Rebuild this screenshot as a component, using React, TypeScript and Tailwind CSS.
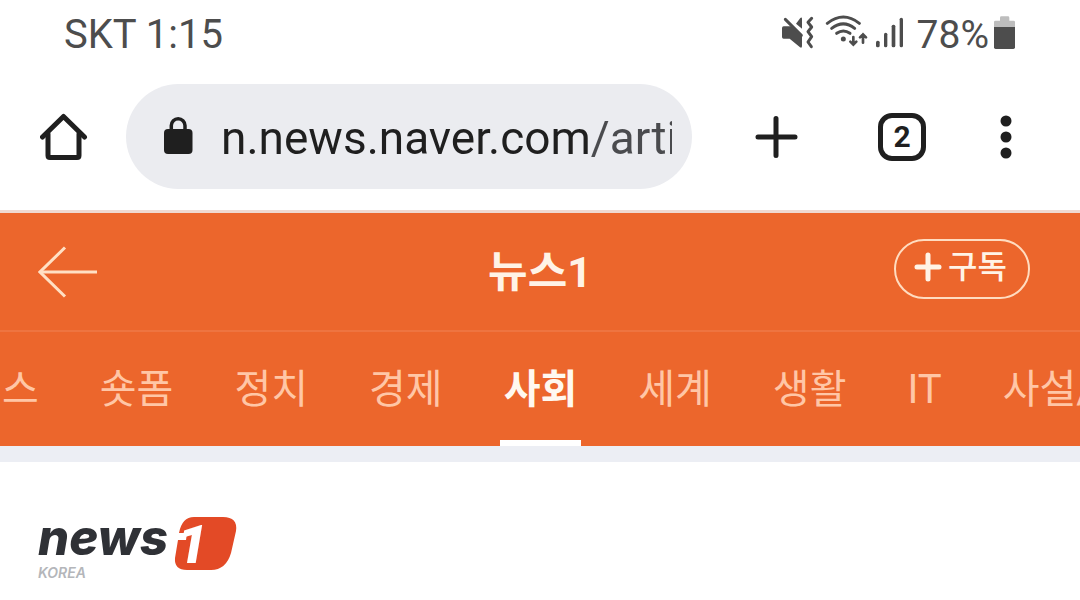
import React, { useState } from 'react';

/* ── Status bar icons ─────────────────────── */
function MuteIcon() {
  return (
    <svg viewBox="60 42 102 108" className="h-9 w-[34px]" fill="currentColor" aria-hidden="true">
      <path d="M68 79 Q63 79 63 84 V111 Q63 116 68 116 H86 L117 142 Q123 145 123 138 V109 L92 79 Z" />
      <path d="M105 71 L118 54 Q123 50 123 57 V86 Z" />
      <path d="M73 58 L121 106" stroke="currentColor" strokeWidth="9" strokeLinecap="round" />
      <path
        d="M152 55 L141 67 L152 81 L141 95 L152 110 L141 126 L151 140"
        fill="none"
        stroke="currentColor"
        strokeWidth="9"
        strokeLinecap="round"
        strokeLinejoin="round"
      />
    </svg>
  );
}

function WifiIcon() {
  return (
    <svg viewBox="192 42 132 108" className="h-9 w-11" fill="none" stroke="currentColor" strokeWidth="9" strokeLinecap="round" aria-hidden="true">
      <path d="M199 70 Q247 32 295 70" />
      <path d="M212 85 Q247 58 281 85" />
      <path d="M227 100 Q247 86 267 100" />
      <circle cx="247" cy="117" r="7.5" fill="currentColor" stroke="none" />
      <path d="M277 111 V133 M268 125 L277 134 L286 125" strokeWidth="8" />
      <path d="M306 128 V104 M297 112 L306 103 L315 112" strokeWidth="8" />
    </svg>
  );
}

function SignalIcon() {
  return (
    <svg viewBox="342 42 90 108" className="h-9 w-[30px]" fill="currentColor" aria-hidden="true">
      <rect x="345" y="122" width="11" height="20" rx="5" />
      <rect x="369" y="98" width="10" height="44" rx="5" />
      <rect x="392" y="74" width="11" height="68" rx="5" />
      <rect x="416" y="53" width="10" height="89" rx="5" />
    </svg>
  );
}

function BatteryIcon() {
  return (
    <svg viewBox="699 42 69 108" className="h-9 w-[23px]" fill="currentColor" aria-hidden="true">
      <path d="M702 82 V66 Q702 62 706 62 H720 V53 Q720 49 724 49 H744 Q748 49 748 53 V62 H761 Q765 62 765 66 V82 Z" fill="#bdbdbd" />
      <path d="M702 81 H765 V142 Q765 147 760 147 H707 Q702 147 702 142 Z" />
    </svg>
  );
}

/* ── Toolbar icons ────────────────────────── */
function HomeIcon() {
  return (
    <svg viewBox="0 0 48 48" className="size-12" fill="none" stroke="currentColor" strokeWidth="5" strokeLinecap="round" strokeLinejoin="round" aria-hidden="true">
      <path d="M2.5 24 L23.5 3.5 L44.5 24" />
      <path d="M8 21 V42.5 Q8 44.5 10 44.5 H37 Q39 44.5 39 42.5 V21" />
    </svg>
  );
}

function LockIcon() {
  return (
    <svg viewBox="0 0 30 38" className="mb-1 h-[38px] w-[30px] shrink-0" aria-hidden="true">
      <rect x="1" y="13" width="28.5" height="25" rx="4" fill="currentColor" />
      <path d="M8.3 14 V9.5 A6.8 6.8 0 0 1 22 9.5 V14" fill="none" stroke="currentColor" strokeWidth="3.5" />
    </svg>
  );
}

function News1Logo() {
  return (
    <a href="#news1" aria-label="news1 KOREA" className="inline-flex items-start">
      <span className="flex flex-col">
        <span className="font-['Inter',sans-serif] text-[49px] leading-[56px] font-extrabold text-[#2f3136] italic">news</span>
        <span className="font-['Inter',sans-serif] text-[14px] leading-[14px] font-semibold text-[#b4b6ba] italic">KOREA</span>
      </span>
      <svg viewBox="0 0 62 55" className="mt-1.5 ml-1.5 h-[55px] w-[62px] overflow-visible">
        <path
          d="M20 1 H49 Q64 1 62 15 L57 37 Q52 54 37 54 H13 Q0 54 1 42 L4 24 H12 L13 17 H5 Q8 1 20 1 Z"
          fill="#e34a26"
        />
        <text x="3" y="47" fill="#fff" className="font-['Roboto',sans-serif] text-[54px] font-black italic">1</text>
      </svg>
    </a>
  );
}

/* ── Sections ─────────────────────────────── */
function StatusBar() {
  return (
    <div className="flex h-[70px] items-start justify-between px-16 pt-3.5 text-[#4d4d4d]">
      <span className="text-[40px] leading-[42px]">SKT 1:15</span>
      <div className="flex items-start">
        <MuteIcon />
        <span className="ml-2.5 flex"><WifiIcon /></span>
        <span className="ml-1.5 flex"><SignalIcon /></span>
        <span className="mr-1 ml-3 text-[39px] leading-[42px]">78%</span>
        <BatteryIcon />
      </div>
    </div>
  );
}

function BrowserToolbar() {
  const [url, setUrl] = useState('n.news.naver.com/arti');

  return (
    <div className="flex items-center border-b-[3px] border-[#f0d9d0] pt-3.5 pr-[68px] pb-[21px] pl-10 text-[#1f1f1f]">
      <button type="button" aria-label="Home" className="mr-[38px]">
        <HomeIcon />
      </button>
      <div className="flex h-[105px] min-w-0 flex-1 items-center rounded-full bg-[#ebecf0] pr-5 pl-[37px]">
        <LockIcon />
        <input
          type="text"
          aria-label="Address"
          value={url}
          onChange={(e) => setUrl(e.target.value)}
          className="ml-7 h-16 min-w-0 flex-1 bg-[linear-gradient(90deg,#1f1f1f_369px,#4a4b4e_369px)] bg-clip-text pt-0.5 text-[46px] leading-[62px] text-transparent outline-none"
        />
      </div>
      <button type="button" aria-label="New tab" className="ml-[62px]">
        <svg viewBox="0 0 44 44" className="size-11" stroke="currentColor" strokeWidth="5" strokeLinecap="round">
          <path d="M22 3.5 V40.5 M4 22 H41" />
        </svg>
      </button>
      <button
        type="button"
        aria-label="Tabs"
        className="ml-20 flex size-12 items-center justify-center rounded-[14px] border-5 border-current text-[30px] leading-8 font-bold"
      >
        2
      </button>
      <button type="button" aria-label="Menu" className="ml-[74px]">
        <svg viewBox="0 0 12 44" className="h-11 w-3" fill="currentColor">
          <circle cx="6" cy="6" r="5.5" />
          <circle cx="6" cy="22" r="5.5" />
          <circle cx="6" cy="38" r="5.5" />
        </svg>
      </button>
    </div>
  );
}

function PressHeader() {
  return (
    <div className="grid h-[119px] grid-cols-[1fr_auto_1fr] items-center border-b-2 border-[#ee7440] px-[50px] text-[#fff3e6]">
      <a href="#back" aria-label="Back" className="-ml-3">
        <svg viewBox="0 0 60 52" className="h-[52px] w-[60px]" fill="none" stroke="#ffe0c4" strokeWidth="3">
          <path d="M27 1.5 L2 26 L27 50.5" />
          <path d="M2 26 H59" />
        </svg>
      </a>
      <h1 className="text-[43px] leading-12 font-bold">뉴스1</h1>
      <button
        type="button"
        className="mb-1.5 flex h-[60px] items-center gap-1.5 justify-self-end rounded-full border-2 border-[#ffdcc0] pr-[21px] pb-1 pl-[18px] text-[32px] leading-10 font-medium"
      >
        <svg viewBox="0 0 28 30" className="h-[30px] w-7" stroke="currentColor" strokeWidth="5" strokeLinecap="round">
          <path d="M14 3 V27 M3 15 H25" />
        </svg>
        구독
      </button>
    </div>
  );
}

const TABS = ['스', '숏폼', '정치', '경제', '사회', '세계', '생활', 'IT', '사설/'];

function CategoryTabs() {
  const [active, setActive] = useState('사회');

  return (
    <nav className="flex h-[114px] gap-[53px] overflow-hidden pl-0.5 text-[40px] leading-[116px] whitespace-nowrap">
      {TABS.map((tab, i) => (
        <a
          key={tab}
          href={`#tab-${i}`}
          onClick={() => setActive(tab)}
          className={
            (tab === active ? 'border-b-6 border-white font-bold text-[#fff8f0]' : 'text-[#ffc6a6]') +
            (i === 0 ? ' shrink-0 pr-1' : ' h-full shrink-0 px-1')
          }
        >
          {tab}
        </a>
      ))}
    </nav>
  );
}

export default function App() {
  return (
    <div className="min-h-screen overflow-hidden bg-white font-['Roboto','Noto_Sans_CJK_KR',sans-serif]">
      <StatusBar />
      <BrowserToolbar />
      <header className="bg-[#ec662c]">
        <PressHeader />
        <CategoryTabs />
      </header>
      <div className="h-4 bg-[#eceef4]" />
      <main className="px-[38px] pt-12">
        <News1Logo />
      </main>
    </div>
  );
}
